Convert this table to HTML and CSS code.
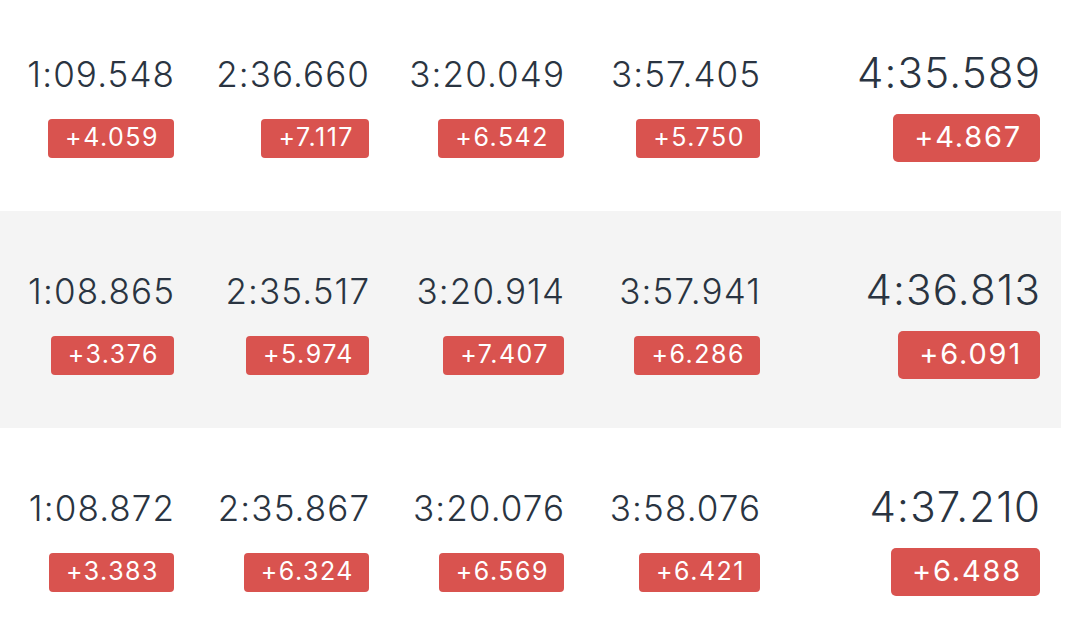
FILE: index.html
```html
<!DOCTYPE html>
<html lang="en">
<head>
<meta charset="utf-8">
<title>Lap times</title>
<link rel="stylesheet" href="styles.css">
</head>
<body>
<div class="list">
  <div class="row">
    <div class="cell"><span class="time">1:09.548</span><span class="gap">+4.059</span></div>
    <div class="cell"><span class="time">2:36.660</span><span class="gap">+7.117</span></div>
    <div class="cell"><span class="time">3:20.049</span><span class="gap">+6.542</span></div>
    <div class="cell"><span class="time">3:57.405</span><span class="gap">+5.750</span></div>
    <div class="cell total"><span class="time">4:35.589</span><span class="gap">+4.867</span></div>
  </div>
  <div class="row shaded">
    <div class="cell"><span class="time">1:08.865</span><span class="gap">+3.376</span></div>
    <div class="cell"><span class="time">2:35.517</span><span class="gap">+5.974</span></div>
    <div class="cell"><span class="time">3:20.914</span><span class="gap">+7.407</span></div>
    <div class="cell"><span class="time">3:57.941</span><span class="gap">+6.286</span></div>
    <div class="cell total"><span class="time">4:36.813</span><span class="gap">+6.091</span></div>
  </div>
  <div class="row">
    <div class="cell"><span class="time">1:08.872</span><span class="gap">+3.383</span></div>
    <div class="cell"><span class="time">2:35.867</span><span class="gap">+6.324</span></div>
    <div class="cell"><span class="time">3:20.076</span><span class="gap">+6.569</span></div>
    <div class="cell"><span class="time">3:58.076</span><span class="gap">+6.421</span></div>
    <div class="cell total"><span class="time">4:37.210</span><span class="gap">+6.488</span></div>
  </div>
</div>
</body>
</html>
```
FILE: styles.css
```css
html, body {
  margin: 0;
  padding: 0;
  background: #ffffff;
}

body {
  font-family: "Inter", "Liberation Sans", sans-serif;
  color: #2a3441;
  overflow: hidden;
}

.list {
  width: 1061px;
}

.row {
  box-sizing: border-box;
  height: 217px;
  padding: 9px 21px 0 0;
  display: grid;
  grid-template-columns: 174px 195px 195px 196px 280px;
  align-items: center;
}

.row:first-child {
  height: 211px;
  padding-top: 3px;
}

.row.shaded {
  background: #f4f4f4;
}

.cell {
  display: flex;
  flex-direction: column;
  align-items: flex-end;
}

.time {
  font-size: 35px;
  line-height: 35px;
  font-weight: 300;
  letter-spacing: 1.1px;
  margin-right: -1.1px;
  white-space: nowrap;
}

.gap {
  margin-top: 27px;
  box-sizing: border-box;
  height: 39px;
  line-height: 37px;
  padding: 0 15px 2px 17px;
  border-radius: 4px;
  background: #d9534f;
  color: #ffffff;
  font-size: 25px;
  font-weight: 400;
  letter-spacing: 1.5px;
  white-space: nowrap;
}

.total .time {
  font-size: 42px;
  line-height: 42px;
  letter-spacing: 1.2px;
  margin-right: -1.2px;
}

.total .gap {
  margin-top: 20px;
  height: 48px;
  line-height: 46px;
  padding: 0 18px 2px 21px;
  font-size: 29px;
  letter-spacing: 1.8px;
  border-radius: 5px;
}
```
